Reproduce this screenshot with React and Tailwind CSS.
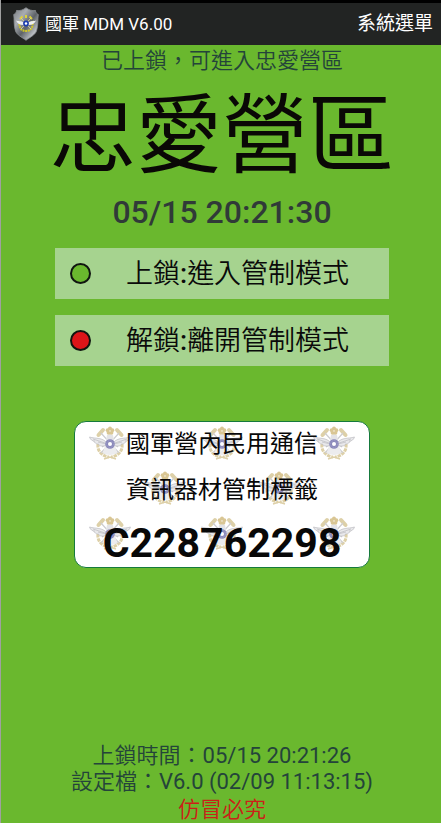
import React from "react";

const pageFont = "font-[Roboto,'Noto_Sans_CJK_TC',sans-serif]";

function Emblem({ className }) {
  return (
    <svg viewBox="0 0 42 34" className={className} aria-hidden="true" fill="none">
      <g stroke="#ddd0a8">
        <path d="M9 18c-1 7 4 12 11 13M33 18c1 7-4 12-11 13" strokeWidth="3" strokeDasharray="3.500 0.800" />
        <path d="M15 33l6-2 6 2" strokeWidth="1.400" />
        <path d="M9.500 9l4.500-5M32.500 9L28 4" strokeWidth="4" strokeLinecap="round" />
      </g>
      <g stroke="#cdcdd0" strokeWidth="1.200">
        <path d="M12 7l18 20M30 7L12 27" />
        <path d="M21 8v20M14 27h14M16 23c1 5 9 5 10 0" />
        <path d="M13 21l4-3M29 21l-4-3" />
      </g>
      <path d="M16 20h10l2 6c-3 4-11 4-14 0z" fill="#ececee" />
      <g fill="#e9e9eb" stroke="#bcbcc2" strokeWidth="0.700">
        <path d="M18 17C13 11 7 13 0.500 11c1 3 3 4 5 4-1 0-1 1 1 2 1 1 2 1 3 1 0 2 5 3 8.500 1z" />
        <path d="M24 17c5-6 11-4 17.500-6-1 3-3 4-5 4 1 0 1 1-1 2-1 1-2 1-3 1 0 2-5 3-8.500 1z" />
        <path d="M4 13l12 4M38 13l-12 4M9 16l8 2M33 16l-8 2" />
      </g>
      <path d="M18 9h6l1 5h-8z" fill="#e3e3e6" />
      <g fill="#d9c694">
        <circle cx="21" cy="2.300" r="1.900" />
        <circle cx="18.600" cy="4.200" r="1.900" />
        <circle cx="23.400" cy="4.200" r="1.900" />
        <circle cx="19.500" cy="6.800" r="1.900" />
        <circle cx="22.500" cy="6.800" r="1.900" />
      </g>
      <circle cx="21" cy="18" r="4.800" fill="#8a88ba" />
      <circle cx="21" cy="18" r="3.400" stroke="#a5a4cc" strokeWidth="0.800" strokeDasharray="1 0.700" />
      <circle cx="21" cy="18" r="2" fill="#fff" />
    </svg>
  );
}

function Shield() {
  return (
    <svg viewBox="0 0 26 34" className="h-[34px] w-[26px] shrink-0" aria-hidden="true">
      <defs>
        <linearGradient id="steel" x1="0" y1="0" x2="1" y2="1">
          <stop offset="0" stopColor="#777b80" />
          <stop offset="0.300" stopColor="#a9adb1" />
          <stop offset="0.550" stopColor="#5d6267" />
          <stop offset="0.800" stopColor="#b9bdc1" />
          <stop offset="1" stopColor="#4e5358" />
        </linearGradient>
      </defs>
      <path
        d="M13 .7c3 2.300 6 3.300 9.500 2.800 0 2 1 3 2.800 4C24.500 12 25.500 18 23.500 24c-1.500 4-6 6-10.500 9.300C8.500 30 4 28 2.500 24 .5 18 1.500 12 .7 7.500c1.800-1 2.800-2 2.800-4C7 4 10 3 13 .7z"
        fill="url(#steel)"
        stroke="#8b8f93"
        strokeWidth="0.800"
      />
      <path d="M6.500 14c-1 6 1.500 10 6.500 10s7.500-4 6.500-10" fill="none" stroke="#cfc62a" strokeWidth="2" strokeDasharray="2 0.600" />
      <path d="M7 12l2.500-2.500M19 12l-2.500-2.500M13 8v3" stroke="#ddd23a" strokeWidth="2" />
      <path d="M8 11l10 11M18 11L8 22" stroke="#d4d0a0" strokeWidth="1" />
      <path d="M12 17c-3-4-5-2-9-3.500 1 3 4 5 9 4.500zM14 17c3-4 5-2 9-3.500-1 3-4 5-9 4.500z" fill="#eceef0" />
      <circle cx="13" cy="16.500" r="2.900" fill="#1c3db0" />
      <circle cx="13" cy="16.500" r="1.200" fill="#fff" />
    </svg>
  );
}

function ModeButton({ dot, action, mode }) {
  return (
    <button type="button" className="flex h-[51px] w-full items-center bg-[#a6d38f] pl-[15px] text-left text-[27px] leading-8 font-[350] text-[#0a0a0a]">
      <span className={`size-[21px] shrink-0 rounded-full border-2 border-[#101510] ${dot}`} />
      <span className="flex-1 pl-[35px] whitespace-nowrap">
        {action}
        <span className="font-medium">:</span>
        {mode}
      </span>
    </button>
  );
}

function EmblemRow({ count, className }) {
  return (
    <div className={`flex justify-between ${className}`}>
      {Array.from({ length: count }, (_, i) => (
        <Emblem key={i} className="h-[34px] w-[42px]" />
      ))}
    </div>
  );
}

export default function App() {
  return (
    <div className={`flex min-h-screen flex-col border-l border-[#a0a0a0] bg-[#6ab82e] text-[#24443a] ${pageFont}`}>
      <header className="flex h-[45px] items-center border-t-3 border-black bg-[#222423] pr-2 pl-3 text-white">
        <Shield />
        <h1 className="flex-1 pl-1.5 text-[17px] leading-6">國軍 MDM V6.00</h1>
        <button type="button" className="text-[19px] leading-6">系統選單</button>
      </header>

      <main className="flex flex-1 flex-col items-center pl-0.5">
        <p className="text-[22px] leading-8 font-[350]">已上鎖，可進入忠愛營區</p>
        <h2 className="pt-1 text-[86px] leading-[112px] whitespace-nowrap text-[#0a0806]">忠愛營區</h2>
        <time className="text-[32px] leading-[38px] font-medium text-[#303a38]">05/15 20:21:30</time>

        <div className="flex w-full flex-col gap-4 px-[52px] pt-[17px]">
          <ModeButton dot="bg-[#6ab82e]" action="上鎖" mode="進入管制模式" />
          <ModeButton dot="bg-[#dd1519]" action="解鎖" mode="離開管制模式" />
        </div>

        <section className="relative mt-[55px] h-[147px] w-[296px] overflow-hidden rounded-xl border border-[#157a3c] bg-white text-[#080808]">
          <div className="absolute inset-0 flex flex-col gap-[11px] pt-1">
            <EmblemRow count={3} className="px-3.5" />
            <EmblemRow count={2} className="px-[69px]" />
            <EmblemRow count={3} className="px-3.5" />
          </div>
          <div className="relative flex flex-col items-center text-center">
            <p className="text-[24px] leading-[45px]">國軍營內民用通信</p>
            <p className="text-[24px] leading-[47px]">資訊器材管制標籤</p>
            <p className="text-[41px] leading-[58px] font-bold">C228762298</p>
          </div>
        </section>

        <footer className="mt-auto text-center text-[22px] leading-[26px] font-[350]">
          <p>
            上鎖時間：<time className="font-normal">05/15 20:21:26</time>
          </p>
          <p>
            設定檔：<span className="font-normal">V6.0 (02/09 11:13:15)</span>
          </p>
          <p className="pt-0.5 text-[#cc2018]">仿冒必究</p>
        </footer>
      </main>
    </div>
  );
}
